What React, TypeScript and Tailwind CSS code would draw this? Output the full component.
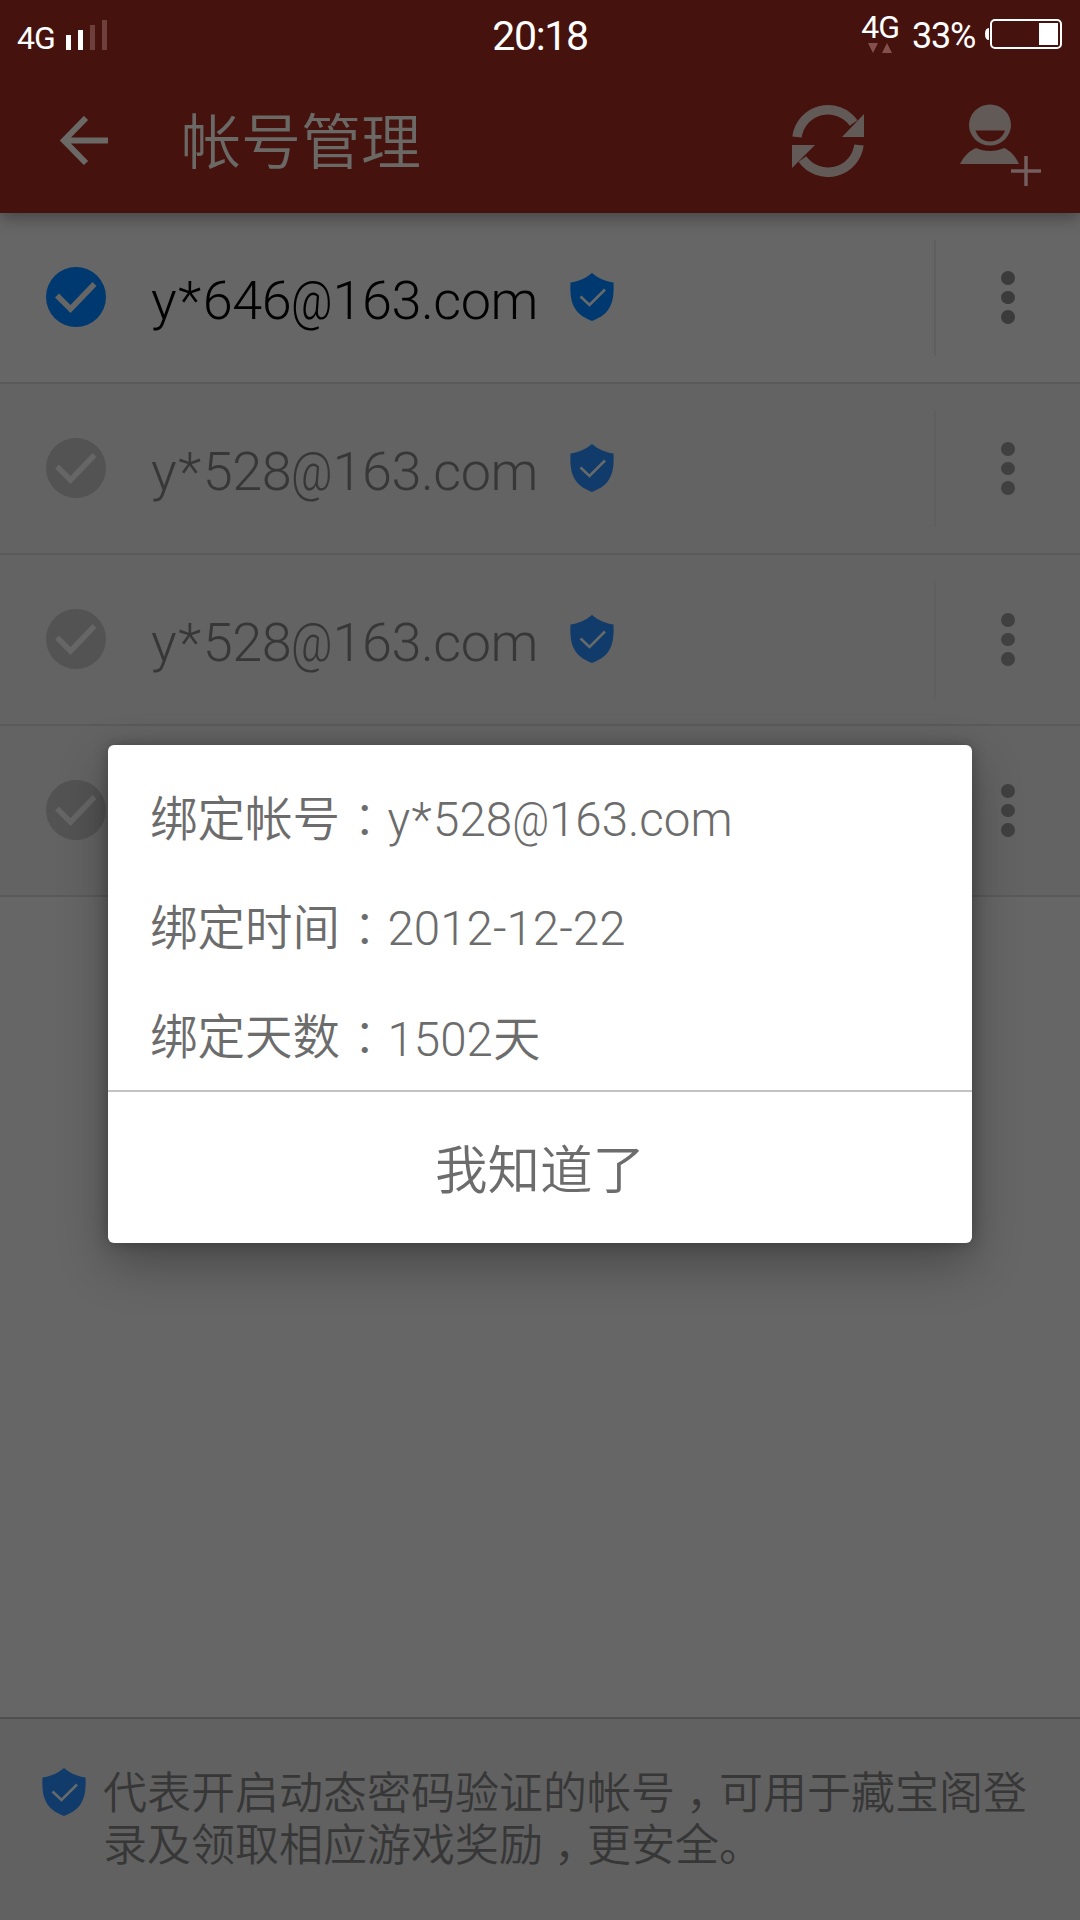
import React from "react";

const CJK = "font-['Noto_Sans_CJK_SC',sans-serif] [font-weight:350]";
const LATIN = "font-['Roboto','Noto_Sans_CJK_SC',sans-serif] [font-weight:300]";

function Shield({ color }: { color: string }) {
  return (
    <svg width="44" height="48" viewBox="0 0 44 48" className="-mt-0.5 block shrink-0">
      <path d="M22 0 C16 5 9 8.500 0.500 9.500 C0 22 1 30 6 37 C10 42.500 16 45.500 22 48 C28 45.500 34 42.500 38 37 C43 30 44 22 43.500 9.500 C35 8.500 28 5 22 0 Z" fill={color} />
      <path d="M10.500 23.500 L19.500 32 L35 16.500" fill="none" stroke="#666a6a" strokeWidth="2.600" />
    </svg>
  );
}

function CheckCircle({ fill, mark }: { fill: string; mark: string }) {
  return (
    <svg width="60" height="60" viewBox="0 0 60 60" className="-mt-0.5 block shrink-0">
      <circle cx="30" cy="30" r="30" fill={fill} />
      <path d="M11 28.500 L24.500 42 L48.500 17" fill="none" stroke={mark} strokeWidth="5.500" />
    </svg>
  );
}

function Signal() {
  return (
    <div className="flex h-[30px] items-end gap-[7px]">
      <div className="h-[15px] w-[5px] bg-white" />
      <div className="h-5 w-[5px] bg-white" />
      <div className="h-[25px] w-[5px] bg-[#6d3f3d]" />
      <div className="h-[30px] w-[5px] bg-[#6d3f3d]" />
    </div>
  );
}

function StatusBar() {
  return (
    <div className="grid h-[68px] grid-cols-3 text-white font-['Roboto',sans-serif]">
      <div className="flex items-start pl-[17px] pt-5">
        <span className="mt-[2px] w-[49px] text-[32px] leading-[32px] tracking-[-1px]">4G</span>
        <Signal />
      </div>
      <div className="pt-[15px] text-center text-[41px] leading-[42px] tracking-[-1.300px]">20:18</div>
      <div className="flex items-start justify-end pr-[18px]">
        <div className="mt-[11px] flex w-[40px] flex-col items-center">
          <span className="text-[32px] leading-[32px] tracking-[-1px]">4G</span>
          <svg width="24" height="10" viewBox="0 0 24 10">
            <path d="M0 0H10L5 10Z M19 0L24 10H14Z" fill="#84504d" />
          </svg>
        </div>
        <span className="ml-[12px] mt-[17px] text-[36px] leading-[38px] tracking-[-1.300px]">33%</span>
        <svg width="78" height="32" viewBox="0 0 78 32" className="ml-[9px] mt-[18px]">
          <path d="M5 10 Q1 10 1 16 Q1 22 5 22Z" fill="#fff" />
          <rect x="7" y="2" width="70" height="28" rx="4" fill="none" stroke="#fff" strokeWidth="2" />
          <rect x="55" y="5" width="19" height="22" fill="#fff" />
        </svg>
      </div>
    </div>
  );
}

function Header() {
  return (
    <header className="relative z-10 h-[213px] bg-[#45120e] shadow-[0_4px_16px_rgba(0,0,0,0.35)]">
      <StatusBar />
      <div className="flex h-[145px] items-center pl-[60px]">
        <svg width="49" height="49" viewBox="0 0 49 49">
          <path d="M26 2 L4 24.500 L26 47 M4 24.500 H48" fill="none" stroke="#6a6966" strokeWidth="6" />
        </svg>
        <h1 className={`-mt-[5px] ml-[72px] w-[600px] text-[60px] leading-[80px] text-[#6a6966] ${CJK}`}>帐号管理</h1>
        <svg width="72" height="73" viewBox="0 0 72 73" className="ml-[11px]">
          <g fill="none" stroke="#625a56" strokeWidth="9.500">
            <path d="M5 33 A31.300 31.300 0 0 1 61.600 19" />
            <path d="M67 41 A31.300 31.300 0 0 1 10.400 55" />
          </g>
          <path d="M72 10 V33 H50 Z M0 41 H23 L0 64 Z" fill="#625a56" />
        </svg>
        <svg width="84" height="83" viewBox="0 0 84 83" className="ml-[95px] mt-[10px]">
          <ellipse cx="31" cy="21" rx="21" ry="20.500" fill="#625a56" />
          <path d="M16.500 26.500 H46 C43.500 33.500 38 37.500 31 37.500 C24 37.500 19 33.500 16.500 26.500Z" fill="#45120e" />
          <path d="M1 60 C5 52 10 47 17 44 C25 48 37 48 45 44 C52 47 56 52 60 60Z" fill="#625a56" />
          <path d="M67 52 V82 M52 67 H82" stroke="#735f60" strokeWidth="3.500" />
        </svg>
      </div>
    </header>
  );
}

function Email({ user, host }: { user: string; host: string }) {
  return (
    <span className="whitespace-nowrap">
      <span className="tracking-[0.030em]">{user.slice(0, 2)}</span>
      {user.slice(2)}
      <span className="-mx-[0.070em] inline-block scale-x-[0.840]">@</span>
      {host}
    </span>
  );
}

function AccountRow({ user, active }: { user?: string; active?: boolean }) {
  const dot = active ? "size-[13.500px] rounded-full bg-[#3b3b3b]" : "size-[13.500px] rounded-full bg-[#404040]";
  return (
    <div className={`flex h-[171px] items-center border-b-2 border-[#5a5a5a] pl-[46px] ${active ? "bg-[#666666]" : "bg-[#636363]"}`}>
      <CheckCircle fill={active ? "#003970" : "#535353"} mark="#666666" />
      <div className={`ml-[45px] w-[419px] pt-[6px] text-[54px] leading-[70px] tracking-[-0.500px] ${LATIN} ${active ? "text-black" : "text-[#373737]"}`}>
        {user && <Email user={user} host="163.com" />}
      </div>
      <Shield color={active ? "#003970" : "#103b6a"} />
      <div className="ml-[320px] h-[116px] w-[2px] bg-[#5f5f5f]" />
      <div className="ml-[65px] flex flex-col gap-[6px]">
        <div className={dot} />
        <div className={dot} />
        <div className={dot} />
      </div>
    </div>
  );
}

function DetailLine({ label, children }: { label: string; children: React.ReactNode }) {
  return (
    <div className="flex h-[109px] items-center text-[47.500px] leading-[70px] text-[#6c6c6c]">
      <span className={`pb-[3px] ${CJK}`}>{label}</span>
      <span className="w-[47.500px] pt-px indent-px font-['Noto_Sans_CJK_TC',sans-serif] [font-weight:300]" lang="zh-TW">：</span>
      <span className={`pt-[4px] ${LATIN}`}>{children}</span>
    </div>
  );
}

function Dialog() {
  return (
    <div className="absolute left-[108px] top-[745px] z-20 h-[498px] w-[864px] rounded-md bg-white shadow-[0_20px_50px_rgba(0,0,0,0.3),0_0_14px_rgba(0,0,0,0.25)]">
      <div className="h-[347px] border-b-2 border-[#c4c4c4] pl-[42px] pt-[18px]">
        <DetailLine label="绑定帐号"><Email user="y*528" host="163.com" /></DetailLine>
        <DetailLine label="绑定时间">2012-12-22</DetailLine>
        <DetailLine label="绑定天数">1502<span className={CJK}>天</span></DetailLine>
      </div>
      <button className={`flex h-[148px] w-full items-center justify-center text-[52.500px] text-[#6c6c6c] ${CJK}`}>我知道了</button>
    </div>
  );
}

export default function App() {
  return (
    <div className="relative flex h-[1920px] w-[1080px] flex-col overflow-hidden bg-[#666666]">
      <Header />
      <main className="flex-1">
        <AccountRow user="y*646" active />
        <AccountRow user="y*528" />
        <AccountRow user="y*528" />
        <AccountRow />
      </main>
      <footer className="flex h-[203px] border-t-2 border-[#505050] bg-[#616161] pl-[42px] pt-[51px]">
        <Shield color="#103b6a" />
        <p className={`-mt-[6px] ml-[17px] text-[44px] leading-[52px] text-[#373737] ${CJK}`}>
          代表开启动态密码验证的帐号<span className="inline-block w-[44px] indent-[11px]">，</span>可用于藏宝阁登
          <br />
          录及领取相应游戏奖励<span className="inline-block w-[44px] indent-[11px]">，</span>更安全。
        </p>
      </footer>
      <Dialog />
    </div>
  );
}
